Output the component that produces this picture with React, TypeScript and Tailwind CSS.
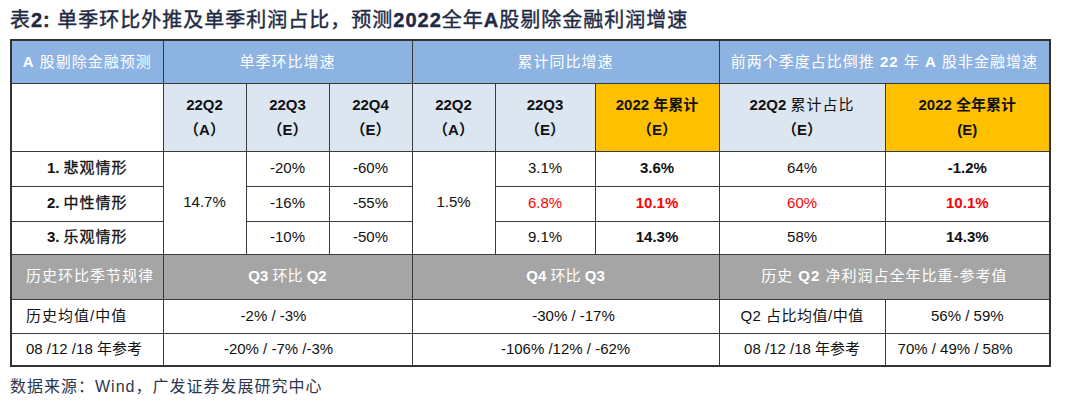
import React from 'react'

const font = "font-['Liberation_Sans','Noto_Sans_CJK_SC',sans-serif]"
const cell = 'border border-[#3a3a3a] text-center align-middle p-0'

const B = ({ children }: { children: React.ReactNode }) => <span className="font-bold">{children}</span>

const scenarios = [
  { name: '1.', label: '悲观情形', q3: '-20%', q4: '-60%', c3: '3.1%', y: '3.6%', share: '64%', full: '-1.2%', red: false },
  { name: '2.', label: '中性情形', q3: '-16%', q4: '-55%', c3: '6.8%', y: '10.1%', share: '60%', full: '10.1%', red: true },
  { name: '3.', label: '乐观情形', q3: '-10%', q4: '-50%', c3: '9.1%', y: '14.3%', share: '58%', full: '14.3%', red: false },
]

export default function App() {
  return (
    <div className={`w-[1080px] h-[409px] bg-white text-[#111] ${font}`}>
      <div className="h-[39px] pl-[10px] flex items-center text-[20px] text-[#1f2a44] tracking-[1px] [-webkit-text-stroke:0.4px_#1f2a44]">
        <span>
          表<B>2:</B> 单季环比外推及单季利润占比，预测<B>2022</B>全年<B>A</B>股剔除金融利润增速
        </span>
      </div>

      <table className="ml-[10px] w-[1039px] table-fixed border-collapse border-2 border-[#333] text-[15px]">
        <colgroup>
          <col className="w-[152px]" />
          <col className="w-[83px]" />
          <col className="w-[83px]" />
          <col className="w-[83px]" />
          <col className="w-[83px]" />
          <col className="w-[100px]" />
          <col className="w-[124px]" />
          <col className="w-[166px]" />
          <col className="w-[165px]" />
        </colgroup>
        <tbody>
          <tr className="h-[43px] bg-[#8db3e2] text-white tracking-[1px]">
            <td className={cell}>
              <B>A</B> 股剔除金融预测
            </td>
            <td className={cell} colSpan={3}>
              单季环比增速
            </td>
            <td className={cell} colSpan={3}>
              累计同比增速
            </td>
            <td className={cell} colSpan={2}>
              前两个季度占比倒推 <B>22</B> 年 <B>A</B> 股非金融增速
            </td>
          </tr>

          <tr className="h-[68px] leading-[25px] font-bold">
            <td className={`${cell} bg-white`}></td>
            {[
              ['22Q2', '（A）'],
              ['22Q3', '（E）'],
              ['22Q4', '（E）'],
              ['22Q2', '（A）'],
              ['22Q3', '（E）'],
            ].map(([a, b], i) => (
              <td key={i} className={`${cell} bg-[#dce6f1]`}>
                <div>{a}</div>
                <div>{b}</div>
              </td>
            ))}
            <td className={`${cell} bg-[#ffc000]`}>
              <div>2022 年累计</div>
              <div>（E）</div>
            </td>
            <td className={`${cell} bg-[#dce6f1]`}>
              <div>
                22Q2 <span className="font-normal tracking-[1px]">累计占比</span>
              </div>
              <div>（E）</div>
            </td>
            <td className={`${cell} bg-[#ffc000]`}>
              <div>2022 全年累计</div>
              <div>(E)</div>
            </td>
          </tr>

          {scenarios.map((s, i) => (
            <tr key={s.name} className={i === 2 ? 'h-[33px]' : 'h-[35px]'}>
              <td className={cell}>
                <B>{s.name}</B> <span className="tracking-[1px] [-webkit-text-stroke:0.3px_#111]">{s.label}</span>
              </td>
              {i === 0 && (
                <td className={cell} rowSpan={3}>
                  14.7%
                </td>
              )}
              <td className={cell}>{s.q3}</td>
              <td className={cell}>{s.q4}</td>
              {i === 0 && (
                <td className={cell} rowSpan={3}>
                  1.5%
                </td>
              )}
              <td className={`${cell} ${s.red ? 'text-[#ff0000]' : ''}`}>{s.c3}</td>
              <td className={`${cell} font-bold ${s.red ? 'text-[#ff0000]' : ''}`}>{s.y}</td>
              <td className={`${cell} ${s.red ? 'text-[#ff0000]' : ''}`}>{s.share}</td>
              <td className={`${cell} font-bold ${s.red ? 'text-[#ff0000]' : ''}`}>{s.full}</td>
            </tr>
          ))}

          <tr className="h-[45px] bg-[#a5a5a5] text-white">
            <td className={`${cell} text-left pl-[14px] tracking-[1px]`}>历史环比季节规律</td>
            <td className={cell} colSpan={3}>
              <B>Q3</B> 环比 <B>Q2</B>
            </td>
            <td className={cell} colSpan={3}>
              <B>Q4</B> 环比 <B>Q3</B>
            </td>
            <td className={`${cell} tracking-[1px]`} colSpan={2}>
              历史 <B>Q2</B> 净利润占全年比重-参考值
            </td>
          </tr>

          <tr className="h-[34px]">
            <td className={`${cell} text-left pl-[14px] tracking-[1px]`}>历史均值/中值</td>
            <td className={`${cell} pr-[28px]`} colSpan={3}>
              -2% / -3%
            </td>
            <td className={`${cell} pl-[16px]`} colSpan={3}>
              -30% / -17%
            </td>
            <td className={`${cell} tracking-[0.5px]`}>Q2 占比均值/中值</td>
            <td className={cell}>56% / 59%</td>
          </tr>

          <tr className="h-[33px]">
            <td className={`${cell} text-left pl-[14px]`}>08 /12 /18 年参考</td>
            <td className={`${cell} pr-[18px]`} colSpan={3}>
              -20% / -7% /-3%
            </td>
            <td className={cell} colSpan={3}>
              -106% /12% / -62%
            </td>
            <td className={cell}>08 /12 /18 年参考</td>
            <td className={`${cell} text-left pl-[12px]`}>70% / 49% / 58%</td>
          </tr>
        </tbody>
      </table>

      <div className="mt-[8px] pl-[10px] text-[16px] tracking-[1px] text-[#2b3650]">数据来源：Wind，广发证券发展研究中心</div>
    </div>
  )
}
